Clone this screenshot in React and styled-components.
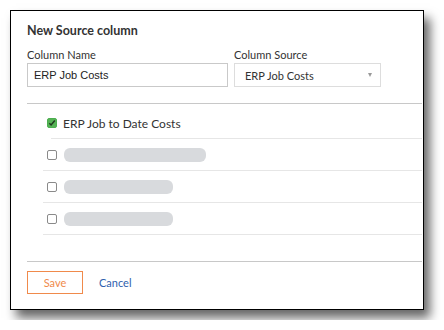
import React from 'react';
import styled, { createGlobalStyle } from 'styled-components';

const GlobalStyle = createGlobalStyle`
  body {
    margin: 0;
    background: #fff;
    font-family: Lato, 'Noto Sans', sans-serif;
  }
`;

const Page = styled.div`
  padding: 10px;
`;

const Dialog = styled.div`
  box-sizing: border-box;
  width: 414px;
  height: 300px;
  border: 1px solid #000;
  background: #fff;
  box-shadow: 6px 8px 10px rgba(0, 0, 0, 0.6);
  padding: 12px 1px 0 16px;
`;

const Title = styled.div`
  font-size: 12.5px;
  line-height: 16px;
  font-weight: 700;
  color: #333;
`;

const Fields = styled.div`
  display: flex;
  gap: 6px;
  margin-top: 9px;
`;

const Field = styled.div`
  width: ${p => p.$width}px;
`;

const Label = styled.div`
  font-size: 11px;
  line-height: 14px;
  color: #333;
  margin-bottom: 1px;
`;

const TextInput = styled.input`
  box-sizing: border-box;
  width: 100%;
  height: 24px;
  border: 1px solid #c9c9c9;
  padding: 0 6px;
  font-family: 'Liberation Sans', Arial, sans-serif;
  font-size: 11px;
  color: #222;
  outline: none;
`;

const Select = styled.div`
  box-sizing: border-box;
  height: 24px;
  border: 1px solid #ddd;
  padding: 0 8px 0 10px;
  display: flex;
  align-items: center;
  justify-content: space-between;
  font-size: 11px;
  color: #333;
`;

const Caret = styled.span`
  width: 0;
  height: 0;
  border-left: 2.5px solid transparent;
  border-right: 2.5px solid transparent;
  border-top: 4px solid #999;
  margin-top: -1px;
`;

const Divider = styled.div`
  height: 1px;
  background: #c8c8c8;
  margin-top: ${p => p.$top}px;
`;

const List = styled.div`
  margin-left: 16px;
`;

const Row = styled.div`
  display: flex;
  align-items: center;
  gap: 6px;
  height: ${p => p.$height}px;
  padding-top: ${p => p.$padTop || 0}px;
  margin-left: ${p => p.$indent || 0}px;
  border-bottom: 1px solid #e6e6e6;
  & > :first-child {
    margin-left: ${p => 4 - (p.$indent || 0)}px;
  }
`;

const Box = styled.span`
  box-sizing: border-box;
  flex: none;
  width: 10px;
  height: 10px;
  border-radius: 2px;
  border: 1px solid ${p => (p.$checked ? '#4caf50' : '#8a8a8a')};
  background: ${p => (p.$checked ? '#55b255' : '#fff')};
  display: flex;
  align-items: center;
  justify-content: center;
`;

const RowText = styled.span`
  font-size: 12px;
  color: #333;
`;

const Skeleton = styled.span`
  width: ${p => p.$width}px;
  height: 14px;
  border-radius: 6px;
  background: #d8dadd;
  margin-left: 1px;
`;

const Footer = styled.div`
  display: flex;
  align-items: center;
  gap: 16px;
  margin-top: 9px;
`;

const SaveButton = styled.button`
  box-sizing: border-box;
  width: 56px;
  height: 23px;
  border: 1px solid #f08a4b;
  background: #fff;
  color: #f08a4b;
  font-family: Lato, sans-serif;
  font-size: 11px;
  padding: 0;
`;

const CancelLink = styled.span`
  font-size: 11px;
  color: #2f5fae;
`;

const Check = () => (
  <svg width="8" height="8" viewBox="0 0 8 8">
    <path d="M1.3 4.2 L3.1 6 L6.8 1.6" fill="none" stroke="#1f3a1f" strokeWidth="1.5" />
  </svg>
);

const placeholders = [142, 109, 109];

export default function App() {
  return (
    <>
      <GlobalStyle />
      <Page>
        <Dialog>
          <Title>New Source column</Title>
          <Fields>
            <Field $width={201}>
              <Label>Column Name</Label>
              <TextInput defaultValue="ERP Job Costs" />
            </Field>
            <Field $width={147}>
              <Label>Column Source</Label>
              <Select>
                <span>ERP Job Costs</span>
                <Caret />
              </Select>
            </Field>
          </Fields>
          <Divider $top={16} />
          <List>
            <Row $height={30} $padTop={4} $indent={8}>
              <Box $checked>
                <Check />
              </Box>
              <RowText>ERP Job to Date Costs</RowText>
            </Row>
            {placeholders.map((w, i) => (
              <Row key={i} $height={31}>
                <Box />
                <Skeleton $width={w} />
              </Row>
            ))}
          </List>
          <Divider $top={26} />
          <Footer>
            <SaveButton>Save</SaveButton>
            <CancelLink>Cancel</CancelLink>
          </Footer>
        </Dialog>
      </Page>
    </>
  );
}
